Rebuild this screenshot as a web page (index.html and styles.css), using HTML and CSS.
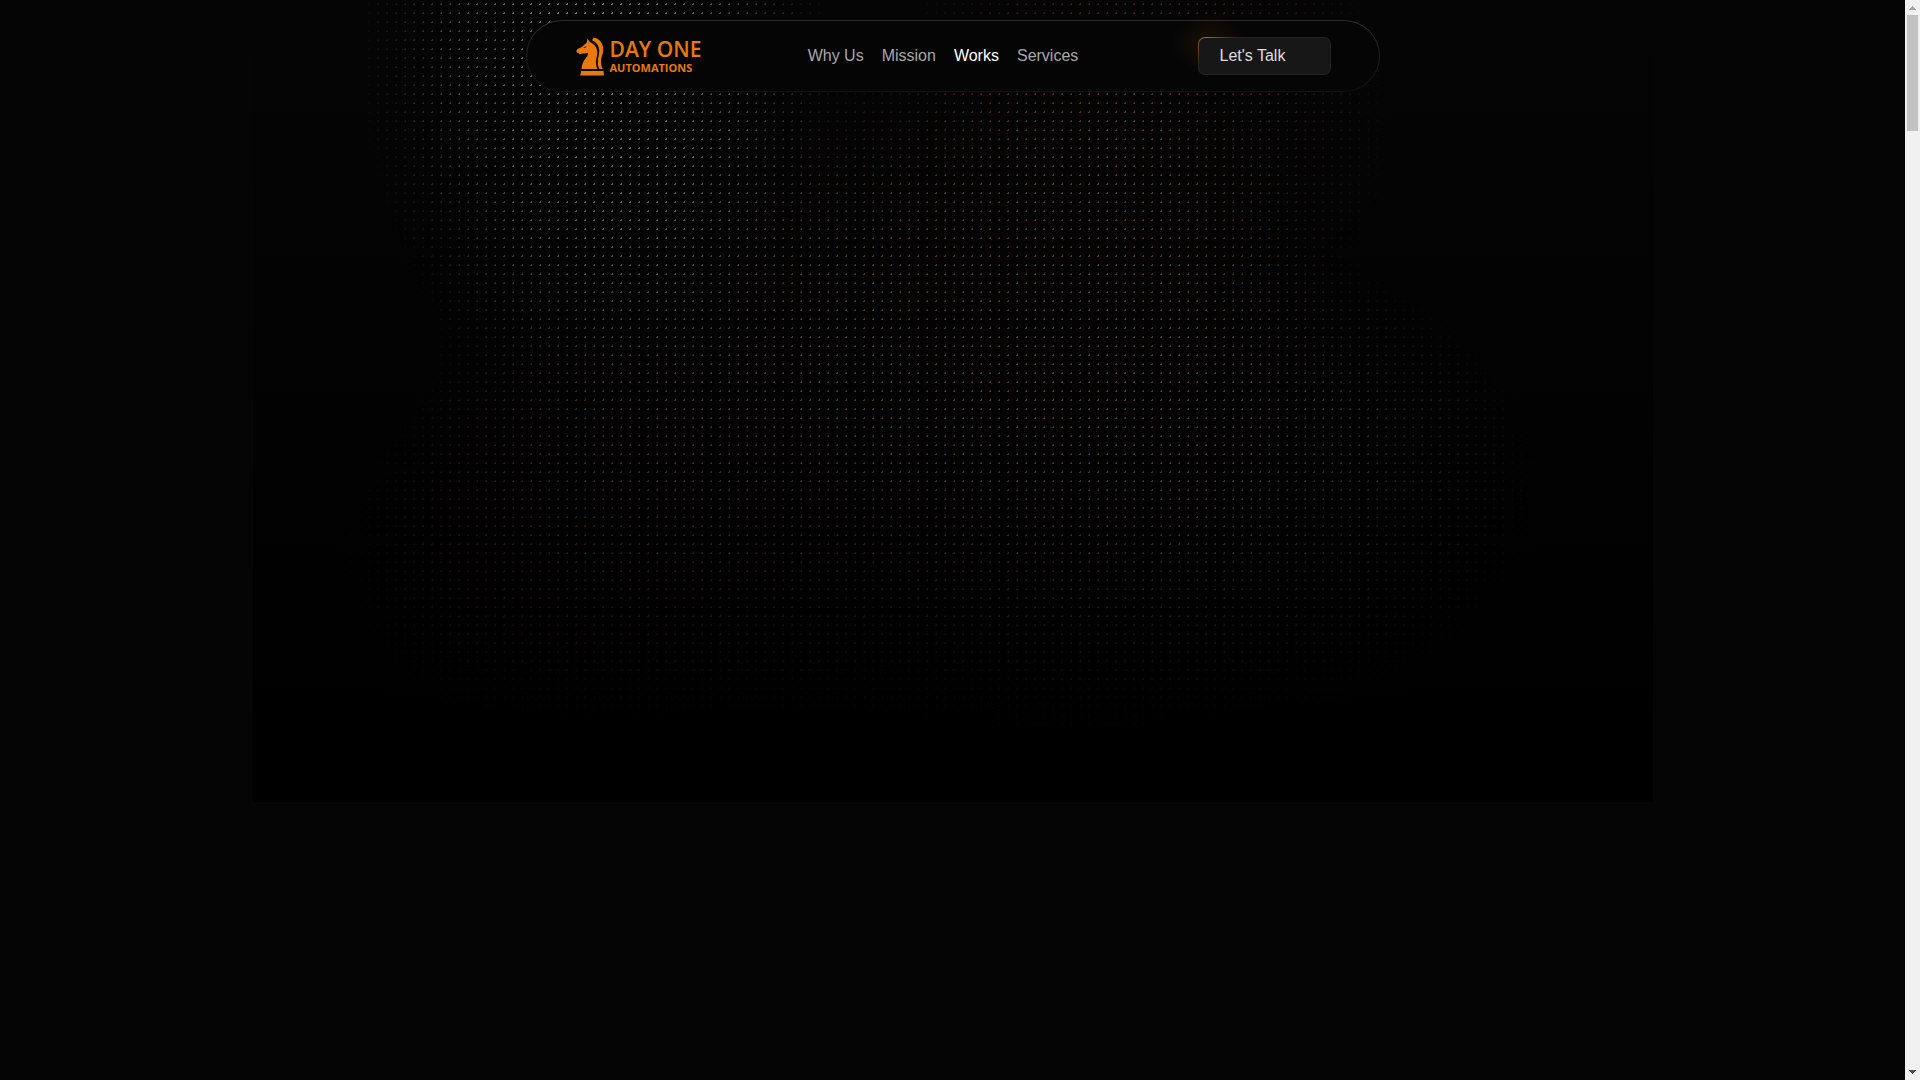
FILE: index.html
```html
<!DOCTYPE html>
<html lang="en">

<head>
    <meta charset="UTF-8">
    <meta name="viewport" content="width=device-width, initial-scale=1.0">
    <title>Day One Automations</title>
    <link rel="stylesheet" href="styles.css">
</head>

<body>
    <main class="page">
        <div class="hero-panel"></div>
        <div class="hero-dots"></div>

        <header class="navbar">
            <a href="#" class="logo">
                <svg class="logo-mark" viewBox="0 0 28 39" aria-hidden="true">
                    <path d="M11.300 1.500L14 5.200C18 6.600 21 10 21.300 15C21.500 19 20 21 20 25C20 28.500 20.700 30.500 21.500 32H5.600C5.800 26 8.500 22.500 11 19.500C12 18 12.200 17 12 15.600C10 16.800 8 16.500 6.200 16.500L4 17.300L2.600 16.200L1.300 15.800L0.300 14L1.200 12.200L6.500 9.500C8 7.500 9.700 6.500 11 5.200Z" />
                    <path d="M16 3.300L17.500 0.500C24 1.500 27.600 7 27.200 13C27 18 24.800 20.500 25 25C25.100 28 25.800 30.500 26.800 32H23.400C22 29.500 21.600 27 21.800 24C22 20 23.500 18 23.200 13C22.900 8.500 20 5 16 3.300Z" />
                    <path d="M5 34H27.500L28 38.500H4.300Z" />
                    <path class="logo-eye" d="M7 10.700L10.600 9.200L9 11Z" />
                </svg>
                <span class="logo-text">
                    <span class="logo-name">DAY ONE</span>
                    <span class="logo-sub">AUTOMATIONS</span>
                </span>
            </a>

            <nav class="nav-links">
                <a href="#why-us">Why Us</a>
                <a href="#mission">Mission</a>
                <a href="#works" class="active">Works</a>
                <a href="#services">Services</a>
            </nav>

            <button type="button" class="cta">Let's Talk</button>
        </header>
    </main>

    <div class="scrollbar" aria-hidden="true">
        <svg class="scroll-arrow" viewBox="0 0 15 15"><path fill="#a3a3a3" d="M7 6h1v1h1v1h1v1h1v1H4V9h1V8h1V7h1z" /></svg>
        <div class="scroll-thumb"></div>
        <svg class="scroll-arrow scroll-down" viewBox="0 0 15 15"><path fill="#505050" d="M4 5h7v1h-1v1H9v1H8v1H7V8H6V7H5V6H4z" /></svg>
    </div>
</body>

</html>
```

FILE: styles.css
```css
* {
    box-sizing: border-box;
}

body {
    margin: 0;
    display: flex;
    height: 100vh;
    overflow: hidden;
    background: #050505;
    color: #fff;
    font-family: "Liberation Sans", Arial, sans-serif;
    font-size: 16px;
}

.page {
    position: relative;
    flex: 1;
    padding-top: 20px;
}

/* Hero background */
.hero-panel {
    position: absolute;
    top: 0;
    left: 0;
    right: 0;
    height: 802px;
    max-width: 1400px;
    margin: 0 auto;
    background: linear-gradient(#050505, #000 90%);
}

.hero-dots {
    position: absolute;
    top: 0;
    left: 0;
    right: 0;
    height: 802px;
    background:
        radial-gradient(ellipse 240px 350px at 595px 60px, rgba(160, 160, 160, 0.7), rgba(140, 140, 140, 0.5) 50%, transparent),
        radial-gradient(ellipse 320px 330px at 730px 370px, rgba(130, 115, 100, 0.6), rgba(130, 100, 75, 0.4) 50%, transparent),
        radial-gradient(ellipse 320px 310px at 1030px 340px, rgba(160, 80, 20, 0.65), rgba(150, 75, 20, 0.5) 55%, transparent),
        radial-gradient(ellipse 260px 290px at 1140px 130px, rgba(120, 70, 30, 0.65), rgba(110, 70, 40, 0.45) 50%, transparent),
        radial-gradient(ellipse 350px 270px at 1200px 500px, rgba(130, 130, 130, 0.7), rgba(120, 120, 120, 0.5) 50%, transparent),
        radial-gradient(ellipse 280px 250px at 600px 580px, rgba(150, 75, 20, 0.7), rgba(130, 75, 30, 0.5) 50%, transparent),
        radial-gradient(ellipse 340px 260px at 980px 600px, rgba(130, 110, 90, 0.5), rgba(120, 100, 80, 0.4) 50%, transparent);
    /* 9px dot grid, faded out towards the bottom */
    mask-image:
        radial-gradient(circle at 14% 14%, #000 1px, transparent 1px),
        linear-gradient(#000, rgba(0, 0, 0, 0.7) 50%, transparent 96%);
    mask-size: 9px 9px, 100% 100%;
    mask-position: -1px 3px, 0 0;
    mask-composite: intersect;
}

/* Navbar */
.navbar {
    position: relative;
    z-index: 1;
    display: flex;
    align-items: center;
    justify-content: space-between;
    width: 854px;
    max-width: 100%;
    height: 72px;
    margin: 0 auto;
    padding: 0 47px 0 48px;
    border: 1px solid transparent;
    border-radius: 36px;
    background:
        linear-gradient(#050505, #050505) padding-box,
        linear-gradient(#2c2c2c, #111) border-box;
}

.navbar a {
    color: #a8a8a8;
    text-decoration: none;
}

.logo {
    display: flex;
    align-items: center;
    gap: 6px;
}

.logo-mark {
    width: 28px;
    height: 39px;
    margin-left: 1px;
    fill: #e8790f;
}

.logo-mark .logo-eye {
    fill: #050505;
}

.logo-text {
    display: flex;
    flex-direction: column;
    min-width: 96px;
    padding-top: 2px;
    color: #e8790f;
    font-family: "Open Sans", "Noto Sans", sans-serif;
}

.logo-name {
    font-size: 21px;
    font-weight: 600;
    line-height: 22px;
}

.logo-sub {
    font-size: 11px;
    font-weight: 700;
    line-height: 16px;
}

.nav-links {
    display: flex;
}

.nav-links a {
    margin-right: 18px;
}

.nav-links a.active {
    color: #fff;
}

.cta {
    position: relative;
    width: 133px;
    height: 38px;
    padding: 0 20px;
    border: 1px solid transparent;
    border-radius: 7px;
    background:
        linear-gradient(#171717, #171717) padding-box,
        radial-gradient(circle at 8px 0, #a8662c, transparent 30px) border-box,
        linear-gradient(#222, #222) border-box;
    color: #dedede;
    font-family: inherit;
    font-size: 16px;
    text-align: left;
    cursor: pointer;
}

/* Warm glow behind the top left corner */
.cta::before {
    content: "";
    position: absolute;
    z-index: -1;
    top: -24px;
    left: -28px;
    width: 76px;
    height: 60px;
    background: radial-gradient(closest-side, rgba(232, 121, 15, 0.1), transparent);
}

/* Scrollbar */
.scrollbar {
    display: flex;
    flex-direction: column;
    width: 15px;
    background: #f1f1f1;
}

.scroll-arrow {
    width: 15px;
    height: 15px;
    shape-rendering: crispEdges;
}

.scroll-thumb {
    height: 116px;
    margin: 0 2px;
    background: #c1c1c1;
}

.scroll-down {
    margin-top: auto;
}
```
